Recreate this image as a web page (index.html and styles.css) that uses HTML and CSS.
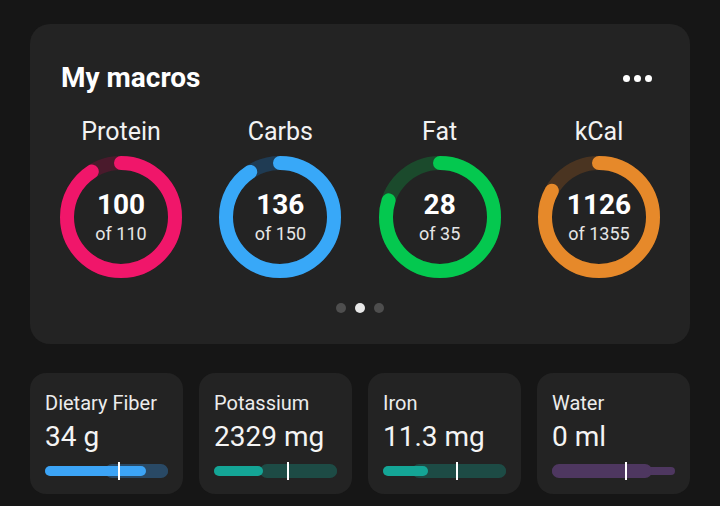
FILE: index.html
```html
<!DOCTYPE html>
<html>
  <head lang="en">
    <meta charset="UTF-8" />
    <title>My macros</title>
    <link rel="stylesheet" href="styles.css">
  </head>

  <body>
    <div class="page">
      <div class="macros">
        <div class="head">
          <h1 class="title">My macros</h1>
          <div class="more">
            <span></span>
            <span></span>
            <span></span>
          </div>
        </div>

        <div class="rings">
          <div class="macro">
            <div class="macro-name">Protein</div>
            <div class="ring">
              <svg viewBox="0 0 122 122" width="122" height="122">
                <circle class="track" cx="61" cy="61" r="54" stroke="#4a1a2c" />
                <circle class="arc" cx="61" cy="61" r="54" pathLength="100" stroke="#f0166a" stroke-dasharray="90.9 100" />
              </svg>
              <div class="ring-text">
                <div class="num">100</div>
                <div class="goal">of 110</div>
              </div>
            </div>
          </div>
          <div class="macro">
            <div class="macro-name">Carbs</div>
            <div class="ring">
              <svg viewBox="0 0 122 122" width="122" height="122">
                <circle class="track" cx="61" cy="61" r="54" stroke="#1f3b53" />
                <circle class="arc" cx="61" cy="61" r="54" pathLength="100" stroke="#38a8f8" stroke-dasharray="90.7 100" />
              </svg>
              <div class="ring-text">
                <div class="num">136</div>
                <div class="goal">of 150</div>
              </div>
            </div>
          </div>
          <div class="macro">
            <div class="macro-name">Fat</div>
            <div class="ring">
              <svg viewBox="0 0 122 122" width="122" height="122">
                <circle class="track" cx="61" cy="61" r="54" stroke="#1b4a2c" />
                <circle class="arc" cx="61" cy="61" r="54" pathLength="100" stroke="#04c84f" stroke-dasharray="80 100" />
              </svg>
              <div class="ring-text">
                <div class="num">28</div>
                <div class="goal">of 35</div>
              </div>
            </div>
          </div>
          <div class="macro">
            <div class="macro-name">kCal</div>
            <div class="ring">
              <svg viewBox="0 0 122 122" width="122" height="122">
                <circle class="track" cx="61" cy="61" r="54" stroke="#4a3421" />
                <circle class="arc" cx="61" cy="61" r="54" pathLength="100" stroke="#e6892a" stroke-dasharray="83.1 100" />
              </svg>
              <div class="ring-text">
                <div class="num">1126</div>
                <div class="goal">of 1355</div>
              </div>
            </div>
          </div>
        </div>

        <div class="pager">
          <span></span>
          <span class="on"></span>
          <span></span>
        </div>
      </div>

      <div class="stats">
        <div class="stat">
          <div class="stat-name">Dietary Fiber</div>
          <div class="stat-value">34 g</div>
          <div class="bar blue">
            <div class="bar-track"></div>
            <div class="bar-band" style="left: 48.8%; width: 51.2%"></div>
            <div class="bar-fill" style="width: 82%"></div>
            <div class="bar-tick" style="left: 60%"></div>
          </div>
        </div>
        <div class="stat">
          <div class="stat-name">Potassium</div>
          <div class="stat-value">2329 mg</div>
          <div class="bar teal">
            <div class="bar-track"></div>
            <div class="bar-band" style="left: 37.4%; width: 62.6%"></div>
            <div class="bar-fill" style="width: 40%"></div>
            <div class="bar-tick" style="left: 60%"></div>
          </div>
        </div>
        <div class="stat">
          <div class="stat-name">Iron</div>
          <div class="stat-value">11.3 mg</div>
          <div class="bar teal">
            <div class="bar-track"></div>
            <div class="bar-band" style="left: 23.6%; width: 76.4%"></div>
            <div class="bar-fill" style="width: 36.6%"></div>
            <div class="bar-tick" style="left: 60%"></div>
          </div>
        </div>
        <div class="stat">
          <div class="stat-name">Water</div>
          <div class="stat-value">0 ml</div>
          <div class="bar purple">
            <div class="bar-track"></div>
            <div class="bar-band" style="left: 0; width: 81.3%"></div>
            <div class="bar-tick" style="left: 60%"></div>
          </div>
        </div>
      </div>
    </div>
  </body>
</html>
```

FILE: styles.css
```css
* {
  padding: 0;
  margin: 0;
  box-sizing: border-box;
}

body {
  background-color: #161616;
  font-family: Roboto, "Noto Sans", sans-serif;
  color: #fff;
}

.page {
  padding: 24px 30px 0;
}

/* top card */
.macros {
  background-color: #232323;
  border-radius: 20px;
  padding: 39px 0 31px;
}

.head {
  display: flex;
  justify-content: space-between;
  align-items: center;
  padding: 0 38px 0 31px;
}

.title {
  font-size: 28px;
  line-height: 30px;
  font-weight: 700;
}

.more {
  display: flex;
  gap: 4px;
}

.more span {
  width: 7px;
  height: 7px;
  border-radius: 50%;
  background-color: #fff;
}

.rings {
  display: grid;
  grid-template-columns: repeat(4, 122px);
  justify-content: space-between;
  padding: 0 30px;
  margin-top: 25px;
}

.macro {
  text-align: center;
}

.macro-name {
  font-size: 25px;
  line-height: 28px;
  color: #f2f2f2;
  margin-bottom: 10px;
}

.ring {
  display: grid;
  place-items: center;
  width: 122px;
  height: 122px;
}

.ring svg,
.ring-text {
  grid-area: 1 / 1;
}

.ring svg {
  transform: rotate(-90deg);
}

.ring circle {
  fill: none;
  stroke-width: 14;
}

.ring .arc {
  stroke-linecap: round;
}

.num {
  font-size: 28px;
  line-height: 30px;
  font-weight: 700;
}

.goal {
  font-size: 18px;
  line-height: 22px;
  color: #e6e6e6;
  margin-top: 3px;
}

.pager {
  display: flex;
  justify-content: center;
  gap: 9px;
  margin-top: 25px;
}

.pager span {
  width: 10px;
  height: 10px;
  border-radius: 50%;
  background-color: #4e4e4e;
}

.pager .on {
  background-color: #e8e8e8;
}

/* small cards */
.stats {
  display: grid;
  grid-template-columns: repeat(4, 1fr);
  gap: 16px;
  margin-top: 29px;
}

.stat {
  background-color: #232323;
  border-radius: 16px;
  padding: 18px 15px 16px;
}

.stat-name {
  font-size: 20px;
  line-height: 24px;
  color: #ececec;
}

.stat-value {
  font-size: 28px;
  line-height: 32px;
  color: #f4f4f4;
  margin-top: 6px;
}

.bar {
  position: relative;
  height: 14px;
  margin-top: 11px;
}

.bar-track {
  position: absolute;
  left: 0;
  right: 0;
  top: 3px;
  height: 8px;
  border-radius: 4px;
}

.bar-band {
  position: absolute;
  top: 0;
  height: 14px;
  border-radius: 7px;
}

.bar-fill {
  position: absolute;
  left: 0;
  top: 2px;
  height: 10px;
  border-radius: 5px;
}

.bar-tick {
  position: absolute;
  top: -2px;
  width: 2px;
  height: 18px;
  margin-left: -1px;
  background-color: #fff;
}

.blue .bar-track,
.blue .bar-band {
  background-color: #294965;
}

.blue .bar-fill {
  background-color: #3ca4f6;
}

.teal .bar-track,
.teal .bar-band {
  background-color: #1d4b45;
}

.teal .bar-fill {
  background-color: #14a596;
}

.purple .bar-track,
.purple .bar-band {
  background-color: #4e3760;
}
```
